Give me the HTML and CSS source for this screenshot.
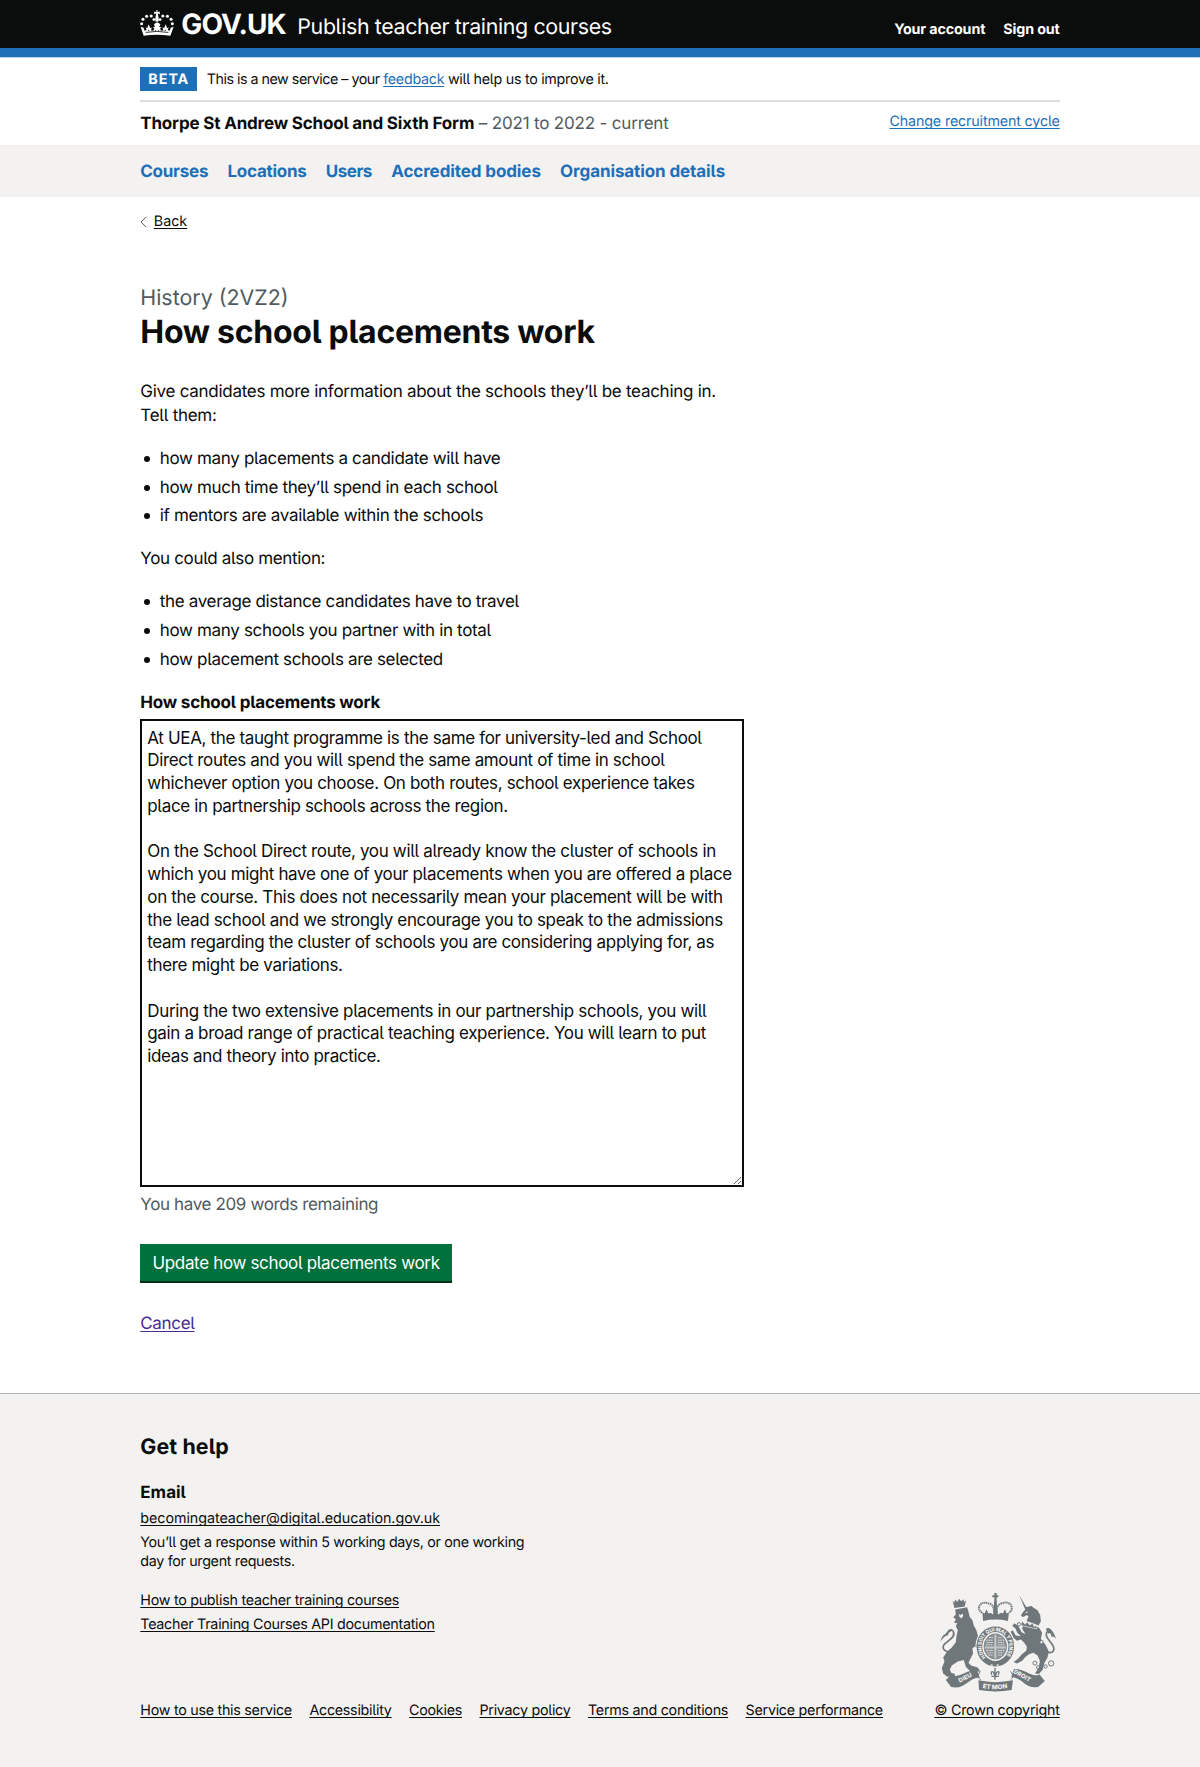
FILE: index.html
```html
<!DOCTYPE html>
<html lang="en">
<head>
<meta charset="utf-8">
<title>How school placements work</title>
<link rel="stylesheet" href="styles.css">
</head>
<body>
<header class="header">
  <div class="container header-row">
    <a class="logo">
      <svg class="logo-crown" viewBox="0 0 103 77" aria-hidden="true">
        <g fill="#fff">
          <circle cx="5" cy="41" r="4.6"/><circle cx="9" cy="27" r="4.6"/><circle cx="20" cy="18" r="4.8"/><circle cx="34" cy="17" r="4.6"/><circle cx="42" cy="28" r="4.2"/>
          <circle cx="98" cy="41" r="4.6"/><circle cx="94" cy="27" r="4.6"/><circle cx="83" cy="18" r="4.8"/><circle cx="69" cy="17" r="4.6"/><circle cx="61" cy="28" r="4.2"/>
          <path d="M49 0h5l-1 6 7-2v8l-6-2 3 17c1 5-2 8-5.500 8S45 32 46 27l3-17-6 2V4l7 2z"/>
          <path d="M2 50l9 3 3 9 6-2-3-8 5 2 4-12 5 12 5-2-3 9 8 1 2-8-5-2 8-3-4-5 4-5 6-3 6 3 4 5-4 5 8 3-5 2 2 8 8-1-3-9 5 2 5-12 4 12 5-2-3 8 6 2 3-9 9-3-10 27q-40-6-81 0z"/>
        </g>
        <path d="M17 67q34-6 69 0M24 60l4 2M75 62l4-2M45 60l3 2M55 62l3-2" stroke="#0b0c0c" stroke-width="2.500" fill="none"/>
      </svg>
      <span class="logo-text">GOV.UK</span>
    </a>
    <span class="service-name">Publish teacher training courses</span>
    <nav class="account"><a>Your account</a><a>Sign out</a></nav>
  </div>
</header>
<div class="container">
  <div class="phase"><strong class="tag">BETA</strong><span class="phase-text">This is a new service – your <span class="phase-end"><a class="link">feedback</a> will help us to improve it.</span></span></div>
  <div class="organisation">
    <p class="org-name"><strong>Thorpe St Andrew School and Sixth Form</strong> <span class="org-cycle">– 2021 to 2022 - current</span></p>
    <a class="link change">Change recruitment cycle</a>
  </div>
</div>
<nav class="primary">
  <div class="container primary-row"><a>Courses</a><a>Locations</a><a>Users</a><a>Accredited bodies</a><a>Organisation details</a></div>
</nav>
<main class="container main">
  <a class="back"><svg viewBox="0 0 7 12" width="7" height="12" aria-hidden="true"><path d="M6.200 1 1 6l5.200 5" fill="none" stroke="#505a5f"/></svg><span class="back-text">Back</span></a>
  <h1 class="title"><span class="caption">History (2VZ2)</span><span class="title-text">How school placements work</span></h1>
  <p class="body intro">Give candidates more information about the schools they’ll be teaching in.<br>Tell them:</p>
  <ul class="list"><li>how many placements a candidate will have</li><li>how much time they’ll spend in each school</li><li>if mentors are available within the schools</li></ul>
  <p class="body">You could also mention:</p>
  <ul class="list"><li>the average distance candidates have to travel</li><li>how many schools you partner with in total</li><li>how placement schools are selected</li></ul>
  <label class="label" for="placements">How school placements work</label>
  <textarea class="textarea" id="placements" spellcheck="false">At UEA, the taught programme is the same for university-led and School
Direct routes and you will spend the same amount of time in school
whichever option you choose. On both routes, school experience takes
place in partnership schools across the region.

On the School Direct route, you will already know the cluster of schools in
which you might have one of your placements when you are offered a place
on the course. This does not necessarily mean your placement will be with
the lead school and we strongly encourage you to speak to the admissions
team regarding the cluster of schools you are considering applying for, as
there might be variations.

During the two extensive placements in our partnership schools, you will
gain a broad range of practical teaching experience. You will learn to put
ideas and theory into practice.</textarea>
  <p class="count">You have 209 words remaining</p>
  <button class="button">Update how school placements work</button>
  <p class="cancel"><a class="visited">Cancel</a></p>
</main>
<footer class="footer">
  <div class="container footer-grid">
    <div class="help">
      <h2 class="help-title">Get help</h2>
      <h3 class="help-sub">Email</h3>
      <a class="footer-link mail">becomingateacher@digital.education.gov.uk</a>
      <p class="response">You’ll get a response within 5 working days, or one working<br>day for urgent requests.</p>
      <a class="footer-link">How to publish teacher training courses</a>
      <a class="footer-link api">Teacher Training Courses API documentation</a>
      <nav class="footer-links"><a>How to use this service</a><a>Accessibility</a><a>Cookies</a><a>Privacy policy</a><a>Terms and conditions</a><a>Service performance</a></nav>
    </div>
    <div class="crown">
      <svg class="crest" viewBox="36 20 360 298" aria-hidden="true">
        <defs>
          <path id="belt" d="M182 214A42 46 0 1 1 240 214"/>
          <path id="ribbon-l" d="M104 290l52-27"/>
          <path id="ribbon-m" d="M172 306q39 8 80-1"/>
          <path id="ribbon-r" d="M264 260l60 34"/>
        </defs>
        <g fill="#6f777b">
          <path d="M82 43l5 6 3-9 7 6 5-9 6 8 7-6 2 9 6-6-4 19-31 4z"/>
          <path d="M90 70L126 63 130 76 134 92 142 102 146 118 154 132 160 154 156 168 168 178 164 188 148 182 142 186 144 202 136 218 130 230 138 238 158 244 166 256 136 256 122 242 116 222 98 226 80 238 74 250 78 260 90 264 88 272 66 272 54 262 50 246 58 226 54 214 66 196 80 184 92 168 94 150 98 132 92 120 96 110 87 110 92 98 84 94 92 84z"/>
          <path d="M283 27l21 35 16-3 5 5 13 8 8 14 2 20-7 12-9-4-27-10 6-13-5-5-11 6-7-3 4-9 9-10z"/>
          <path d="M294 112L342 124 352 140 348 158 362 176 372 196 368 214 358 232 354 250 342 264 330 262 342 244 345 224 338 208 326 200 312 204 300 214 292 224 276 232 266 228 280 217 290 205 304 194 306 182 298 170 288 160 276 164 264 154 257 136 264 133 272 148 288 150 277 140 271 126 262 119 268 111 281 120 290 138 302 144 292 128z"/>
          <path d="M208 20h7v7h5v6h-5v7l2 39h-12l3-39v-7h-6v-6h6zM172 78l7 4 5-13 6 12 8-1 5 5 8-18 9 18 6-5 8 1 6-12 5 13 7-4-3 26q-38-9-75 0z"/>
          <path d="M78 266c25 13 41-14 78-14l8 22c-38 2-43 38-86 29l-16-21zM344 265c-26 12-40-18-77-16l-8 24c37 3 40 37 81 30l20-18zM160 283q50 11 104 0l-4 29q-47 9-98 0z"/>
          <path d="M101 83l5 3 7-4 1 7-5 8-6-5z" fill="#f3f2f1"/>
          <path d="M302 79l6-2" stroke="#f3f2f1" stroke-width="3"/>
          <path d="M62 142q14-22 24-8-15 0-18 14-10 0-22 18 2-16 16-24zM370 142q-14-20 4-16 12 8 20 32-8-10-15-6 2-14-9-10z"/>
        </g>
        <g fill="none" stroke="#6f777b">
          <path d="M171 79q-16-10-5-25 11-10 32 0 11 8 8 25m11 0q-5-16 7-25 22-11 33 1 9 14-5 25" stroke-width="6" stroke-dasharray="4 2"/>
          <path d="M84 192c-22 13-40-6-24-20s34-23 23-38" stroke-width="5"/>
          <path d="M362 196c24 10 30-5 21-20-14-20-27-28-13-44" stroke-width="5"/>
          <ellipse cx="211" cy="181" rx="58" ry="62" stroke="#f3f2f1" stroke-width="4"/>
          <ellipse cx="211" cy="181" rx="48" ry="52" fill="#f3f2f1" stroke-width="17"/>
          <ellipse cx="211" cy="181" rx="34" ry="38" fill="#8b9194" stroke="#6f777b" stroke-width="2"/>
          <path d="M183 162h20M185 169h18M183 176h20M219 162h20M219 169h18M219 176h20M184 193h19M186 200h17M190 207h13M219 193h19M219 200h17M219 207h12M192 154h11M219 154h11" stroke="#eceeed" stroke-width="2.500" stroke-dasharray="5 2"/>
          <path d="M211 145v72M179 184h64" stroke="#c5c8c9" stroke-width="6"/>
          <path d="M210 246v35M200 266q-4-12 5-8l5 12 6-12q10-4 4 8M199 271h23" stroke-width="4"/>
          <path d="M166 256q-14 17 1 25M257 256q13 17 0 25" stroke-width="3"/>
          <g stroke-width="3"><circle cx="330" cy="231" r="6"/><circle cx="340" cy="244" r="5"/><circle cx="362" cy="241" r="5"/><circle cx="379" cy="232" r="8"/><circle cx="282" cy="114" r="5"/><circle cx="350" cy="168" r="5" fill="#f3f2f1"/></g>
          <path d="M197 236l6 2M215 238l6-2" stroke="#f3f2f1" stroke-width="4"/>
        </g>
        <g class="crest-text">
          <text font-size="15"><textPath href="#belt" textLength="204">HONI SOIT QUI MAL Y PENSE</textPath></text>
          <text font-size="18"><textPath href="#ribbon-l">DIEU</textPath></text>
          <text font-size="19"><textPath href="#ribbon-m" textLength="76">ET MON</textPath></text>
          <text font-size="18"><textPath href="#ribbon-r">DROIT</textPath></text>
        </g>
        <path d="M288 113l5-8 7 9 8-7 7 10 8-7 5 11 9-4-2 11-46-10z" fill="#6f777b" stroke="#f3f2f1" stroke-width="2"/>
      </svg>
      <a class="footer-link">© Crown copyright</a>
    </div>
  </div>
</footer>
</body>
</html>
```
FILE: styles.css
```css
* { box-sizing: border-box; }
body { margin: 0; background: #fff; color: #0b0c0c; font: 17px/24px Inter, "Liberation Sans", sans-serif; font-feature-settings: "cv05"; letter-spacing: -.34px; text-rendering: geometricPrecision; }
p, h1, h2, h3, ul { margin: 0; padding: 0; font-size: inherit; }
.container { width: 919.400px; margin: 0 auto; }
.link, .back-text, .visited, .footer-link, .footer-links a { text-decoration: underline; text-decoration-thickness: 1px; text-underline-offset: 2px; text-decoration-skip-ink: none; }
.link { color: #1d70b8; }
.header { height: 57px; background: #0b0c0c; border-bottom: 9px solid #1d70b8; box-shadow: 0 1px #b9d2e8; color: #fff; }
.header-row { display: flex; height: 48px; }
.logo { display: flex; width: 157px; }
.logo-crown { width: 34px; height: 26px; margin: 10px 7px 0 0; }
.logo-text { font-size: 28px; line-height: 28px; font-weight: 700; padding-top: 10px; letter-spacing: -.850px; }
.service-name { font-size: 21.400px; line-height: 28px; padding-top: 13px; letter-spacing: -.360px; }
.account { display: flex; gap: 18px; margin-left: auto; padding-top: 20px; font-size: 14.300px; line-height: 20px; font-weight: 700; letter-spacing: -.130px; }
.phase { display: flex; align-items: center; height: 45px; border-bottom: 2px solid #dcdede; font-size: 14.300px; line-height: 20px; }
.tag { background: #1d70b8; color: #fff; width: 57px; height: 24px; line-height: 25px; text-align: center; letter-spacing: .950px; margin-right: 9.500px; }
.phase-text { padding-top: 2px; letter-spacing: -.500px; }
.phase-end { letter-spacing: -.280px; }
.organisation { display: flex; justify-content: space-between; height: 43px; padding-top: 10px; letter-spacing: -.180px; }
.org-cycle, .caption, .count { color: #505a5f; font-weight: 400; }
.change { font-size: 14.300px; line-height: 20px; letter-spacing: -.160px; }
.primary { height: 52px; background: #f3f2f1; }
.primary-row { display: flex; gap: 19.300px; padding-top: 15px; color: #1d70b8; font-weight: 700; letter-spacing: -.260px; }
.primary-row a:nth-child(3) { letter-spacing: -.500px; }
.primary-row a:nth-child(n + 4) { letter-spacing: -.100px; }
.main { height: 1196px; padding-top: 15px; }
.back { display: flex; align-items: center; gap: 6.500px; height: 20px; font-size: 14.300px; line-height: 20px; letter-spacing: 0; }
.title { margin-top: 52px; }
.caption { display: block; font-size: 21.400px; line-height: 29px; letter-spacing: 0; }
.title-text { display: block; font-size: 32px; line-height: 38px; font-weight: 700; letter-spacing: -.270px; }
.body { margin-top: 19px; }
.intro { margin-top: 29px; letter-spacing: -.270px; }
.list { list-style: none; margin-top: 19px; }
.list li { padding-left: 19.500px; margin-bottom: 4.700px; position: relative; }
.list li::before { content: ""; position: absolute; left: 4px; top: 9px; width: 6px; height: 6px; border-radius: 50%; background: #0b0c0c; }
.label { display: block; margin-top: 19px; font-weight: 700; letter-spacing: -.200px; }
.textarea { display: block; width: 604px; height: 468px; margin-top: 4px; padding: 6px 5px; border: 2px solid #0b0c0c; font: inherit; letter-spacing: -.350px; line-height: 22.730px; color: #0b0c0c; white-space: pre; resize: both; overflow: hidden; font-feature-settings: inherit; }
.count { margin-top: 6px; letter-spacing: -.370px; }
.button { display: block; width: 311.500px; height: 37px; margin-top: 27px; padding: 2px 0 0; border: 0; background: #00703c; box-shadow: 0 2px #002d18; color: #fff; font: inherit; letter-spacing: inherit; font-feature-settings: inherit; }
.cancel { margin-top: 31.500px; }
.visited { color: #4c2c92; }
.footer { height: 374px; background: #f3f2f1; border-top: 1px solid #b1b4b6; padding-top: 39px; }
.footer-grid { display: flex; justify-content: space-between; align-items: flex-end; }
.help, .crown { font-size: 14.300px; line-height: 19px; letter-spacing: -.270px; }
.help-title, .help-sub { letter-spacing: 0; }
.help-title { font-size: 21.400px; line-height: 28px; letter-spacing: .1px; }
.help-sub { font-size: 17px; line-height: 24px; margin: 20px 0 4px; }
.help .footer-link { display: block; width: max-content; }
.mail { letter-spacing: -.050px; }
.response { margin: 5px 0 20px; letter-spacing: -.320px; }
.api { margin-top: 5px; }
.footer-links { display: flex; gap: 17.500px; margin-top: 67px; }
.crown { display: flex; flex-direction: column; align-items: center; letter-spacing: -.240px; }
.crest { width: 120px; height: 99px; margin-bottom: 9px; }
.crest-text { fill: #f3f2f1; font-weight: 800; letter-spacing: 0; }
```
